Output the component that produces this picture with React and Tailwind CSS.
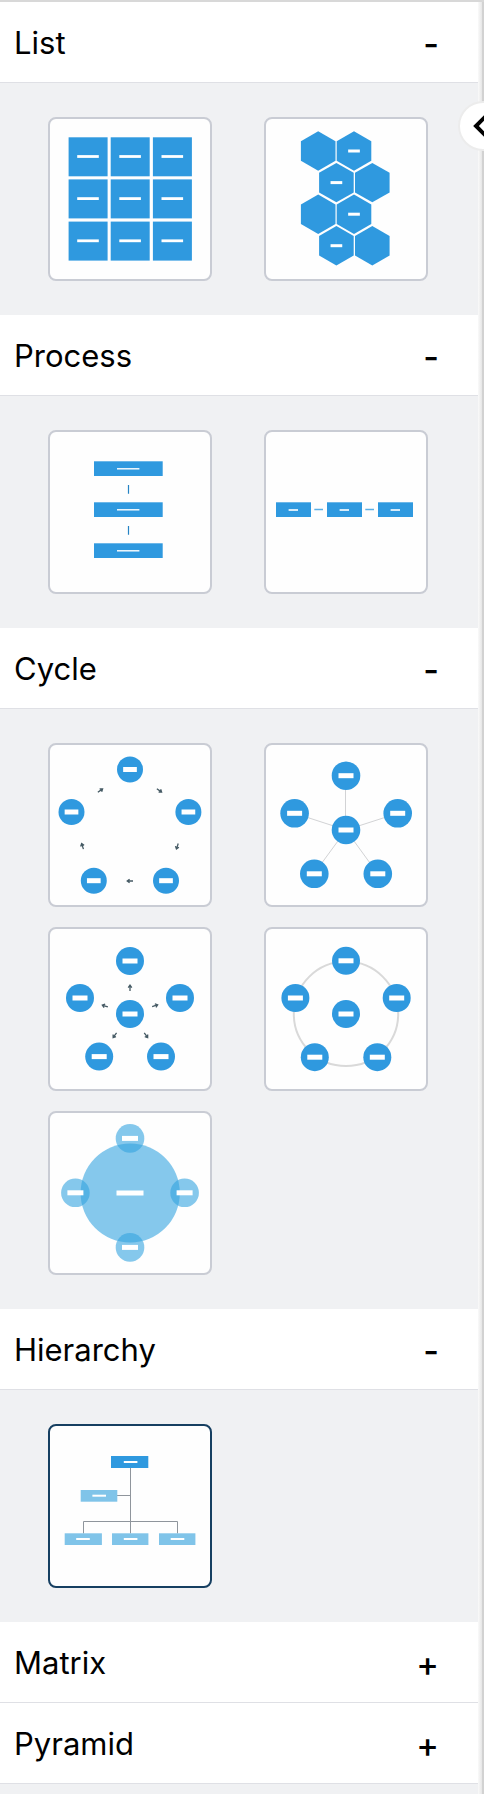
import { useState } from "react";

const BLUE = "#2f99df";
const LIGHT = "#80c4e9";

const Bar = ({ x, y, w, h }) => (
  <rect x={x - w / 2} y={y - h / 2} width={w} height={h} fill="white" />
);

const Node = ({ x, y, r, w = 15, h = 5 }) => (
  <g>
    <circle cx={x} cy={y} r={r} fill={BLUE} />
    <Bar x={x} y={y} w={w} h={h} />
  </g>
);

const Arrow = ({ x, y, angle }) => (
  <path
    d="M-3 0H2.4M0.4 -1.8L2.8 0L0.4 1.8"
    transform={`translate(${x} ${y}) rotate(${angle})`}
    fill="none"
    stroke="#455a64"
    strokeWidth="1.3"
  />
);

const BlockGrid = () => (
  <>
    {[18.3, 60.4, 102.6].map((y) =>
      [18.6, 60.7, 102.9].map((x) => (
        <g key={`${x}-${y}`}>
          <rect x={x} y={y} width="39" height="39" fill={BLUE} />
          <Bar x={x + 19.4} y={y + 19.2} w={21.6} h={2.8} />
        </g>
      ))
    )}
  </>
);

const HexList = () => {
  const cells = [
    [52.2, 32, false],
    [88, 32, true],
    [70.4, 63.6, true],
    [106.3, 63.6, false],
    [52.2, 95.2, false],
    [88, 95.2, true],
    [70.4, 126.7, true],
    [106.3, 126.7, false],
  ];
  return (
    <>
      {cells.map(([x, y, bar]) => (
        <g key={`${x}-${y}`}>
          <path
            d="M0 -19.7L17.3 -9.8V9.8L0 19.7L-17.3 9.8V-9.8Z"
            transform={`translate(${x} ${y})`}
            fill={BLUE}
          />
          {bar && <Bar x={x} y={y} w={11.7} h={3} />}
        </g>
      ))}
    </>
  );
};

const VerticalProcess = () => (
  <>
    {[29.3, 70.3, 111.3].map((y) => (
      <g key={y}>
        <rect x="44" y={y} width="68.7" height="14.7" fill={BLUE} />
        <Bar x={78.2} y={y + 7.5} w={22.4} h={1.4} />
      </g>
    ))}
    <path d="M78.5 53V61.7M78.5 94V102.7" stroke="#2583c4" strokeWidth="1.2" />
  </>
);

const HorizontalProcess = () => (
  <>
    {[10, 61, 112].map((x) => (
      <g key={x}>
        <rect x={x} y="70.3" width="35" height="14.7" fill={BLUE} />
        <Bar x={x + 17.3} y={78} w={9.4} h={1.6} />
      </g>
    ))}
    <path d="M48.3 77.5H57M99.3 77.5H108" stroke="#5cb0e6" strokeWidth="1.4" />
  </>
);

const BasicCycle = () => (
  <>
    <Node x={80} y={24.5} r={13} w={13.7} />
    <Node x={21.5} y={67} r={13} w={13.7} />
    <Node x={138.4} y={67} r={13} w={13.7} />
    <Node x={43.8} y={135.7} r={13} w={13.7} />
    <Node x={116} y={135.7} r={13} w={13.7} />
    <Arrow x={50.3} y={45.5} angle={-35} />
    <Arrow x={109.3} y={45.5} angle={35} />
    <Arrow x={127.3} y={101.3} angle={108} />
    <Arrow x={80} y={136} angle={180} />
    <Arrow x={32.5} y={101.3} angle={-108} />
  </>
);

const RadialCycle = () => (
  <>
    <path
      d="M79.5 85V30.7M80 85L28.7 68.3M80 85L131.7 68.3M80 85L48 128.7M80 85L111.7 128.7"
      stroke="#d2d3d5"
      strokeWidth="1"
    />
    <Node x={80} y={30.7} r={14.3} />
    <Node x={28.6} y={68.3} r={14.3} />
    <Node x={131.7} y={68.3} r={14.3} />
    <Node x={48.3} y={128.8} r={14.3} />
    <Node x={111.8} y={128.8} r={14.3} />
    <Node x={80} y={85} r={14.3} />
  </>
);

const DivergingCycle = () => (
  <>
    <Node x={80} y={32} r={14} />
    <Node x={30} y={69} r={14} />
    <Node x={130} y={69} r={14} />
    <Node x={49.2} y={127.6} r={14} />
    <Node x={111} y={127.6} r={14} />
    <Node x={80} y={85} r={14} />
    <Arrow x={80} y={59} angle={-90} />
    <Arrow x={55} y={77} angle={-162} />
    <Arrow x={105} y={76.7} angle={-18} />
    <Arrow x={64.8} y={106.3} angle={126} />
    <Arrow x={96} y={106.3} angle={54} />
  </>
);

const RingCycle = () => (
  <>
    <circle cx="80" cy="84.8" r="52.2" fill="none" stroke="#d9d9d9" strokeWidth="2" />
    <Node x={80} y={31.8} r={14} />
    <Node x={29.4} y={69} r={14} />
    <Node x={130.7} y={69} r={14} />
    <Node x={48.8} y={128.2} r={14} />
    <Node x={111.3} y={128.2} r={14} />
    <Node x={80} y={85} r={14} />
  </>
);

const RadialVenn = () => {
  const outer = [
    [80, 25.4],
    [25.4, 79.8],
    [134.6, 79.8],
    [80, 134.4],
  ];
  return (
    <>
      <circle cx="80.2" cy="80" r="49.6" fill="#33a4df" fillOpacity="0.6" />
      {outer.map(([x, y]) => (
        <g key={`${x}-${y}`}>
          <circle cx={x} cy={y} r="14.3" fill="#33a4df" fillOpacity="0.6" />
          <Bar x={x} y={y} w={16} h={5} />
        </g>
      ))}
      <Bar x={80} y={80} w={27} h={5} />
    </>
  );
};

const OrgChart = () => (
  <>
    <path
      d="M80.5 42V107.5M67 69.5H80.5M33.5 107.5V95.5H127.5V107.5"
      fill="none"
      stroke="#8f959c"
      strokeWidth="1"
    />
    <rect x="61" y="30" width="37.3" height="12" fill={BLUE} />
    <rect x="30.7" y="64" width="36.6" height="11.7" fill={LIGHT} />
    <rect x="14.7" y="107.3" width="37.2" height="11.7" fill={LIGHT} />
    <rect x="62" y="107.3" width="36.4" height="11.7" fill={LIGHT} />
    <rect x="109" y="107.3" width="36.4" height="11.7" fill={LIGHT} />
    <Bar x={80.6} y={36} w={13.6} h={2} />
    <Bar x={49.2} y={69.7} w={13.6} h={2} />
    <Bar x={33} y={113} w={13.6} h={2} />
    <Bar x={80.6} y={113} w={13.6} h={2} />
    <Bar x={127.5} y={113} w={13.6} h={2} />
  </>
);

const SECTIONS = [
  {
    title: "List",
    items: [
      { id: "block-grid", label: "Block list", Drawing: BlockGrid },
      { id: "hex-list", label: "Hexagon list", Drawing: HexList },
    ],
  },
  {
    title: "Process",
    items: [
      { id: "process-v", label: "Vertical process", Drawing: VerticalProcess },
      { id: "process-h", label: "Horizontal process", Drawing: HorizontalProcess },
    ],
  },
  {
    title: "Cycle",
    items: [
      { id: "cycle", label: "Basic cycle", Drawing: BasicCycle },
      { id: "radial", label: "Basic radial", Drawing: RadialCycle },
      { id: "diverging", label: "Diverging radial", Drawing: DivergingCycle },
      { id: "ring", label: "Radial cycle", Drawing: RingCycle },
      { id: "venn", label: "Radial venn", Drawing: RadialVenn },
    ],
  },
  {
    title: "Hierarchy",
    items: [{ id: "org", label: "Organization chart", Drawing: OrgChart }],
  },
  { title: "Matrix", items: [] },
  { title: "Pyramid", items: [] },
];

const Section = ({ title, items, isOpen, onToggle, selected, onSelect }) => (
  <section>
    <button
      type="button"
      aria-expanded={isOpen}
      onClick={onToggle}
      className="flex h-[81px] w-full cursor-pointer items-center justify-between border-b border-[#dfe0e5] bg-white pl-3.5 pr-[39px] pt-0.5 text-[31px] text-black"
    >
      <span>{title}</span>
      <span className="text-[34px] font-medium">{isOpen ? "-" : "+"}</span>
    </button>
    {isOpen && items.length > 0 && (
      <div className="grid grid-cols-[repeat(2,164px)] justify-between gap-y-5 py-[34px] pl-12 pr-[50px]">
        {items.map(({ id, label, Drawing }) => (
          <button
            key={id}
            type="button"
            aria-label={label}
            onClick={() => onSelect(id)}
            className={`size-[164px] cursor-pointer rounded-lg border-2 bg-[#fefefe] ${
              selected === id ? "border-[#163f61]" : "border-[#c9ccd4]"
            }`}
          >
            <svg viewBox="0 0 160 160" className="block size-full">
              <Drawing />
            </svg>
          </button>
        ))}
      </div>
    )}
  </section>
);

const App = () => {
  const [open, setOpen] = useState(["List", "Process", "Cycle", "Hierarchy"]);
  const [selected, setSelected] = useState("org");

  const toggle = (title) => {
    setOpen((prev) =>
      prev.includes(title) ? prev.filter((t) => t !== title) : [...prev, title]
    );
  };

  return (
    <div className="relative flex min-h-screen overflow-hidden border-t-2 border-[#d8d8d8] bg-[#f0f1f3] font-[Inter,sans-serif]">
      <main className="min-w-0 flex-1">
        {SECTIONS.map((section) => (
          <Section
            key={section.title}
            title={section.title}
            items={section.items}
            isOpen={open.includes(section.title)}
            onToggle={() => toggle(section.title)}
            selected={selected}
            onSelect={setSelected}
          />
        ))}
      </main>
      <div className="w-1.5 border-r-2 border-[#d2d2d2] bg-linear-to-r from-[#fafafa] to-[#e6e6e6]" />
      <button
        type="button"
        aria-label="Collapse panel"
        className="absolute -right-6 top-[99px] flex size-[50px] cursor-pointer items-center justify-center rounded-full border-2 border-[#ececec] bg-white text-black"
      >
        <svg viewBox="0 0 24 24" className="size-6" fill="none" stroke="currentColor" strokeWidth="4">
          <path d="M15 2L5 12L15 22" />
        </svg>
      </button>
    </div>
  );
};

export default App;
